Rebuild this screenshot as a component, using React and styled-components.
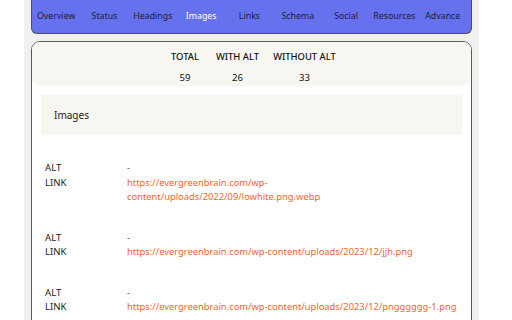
import React from "react";
import styled, { createGlobalStyle } from "styled-components";

const Global = createGlobalStyle`
  html, body { margin: 0; padding: 0; background: #ffffff; }
  body { font-family: "Noto Sans", "Open Sans", sans-serif; color: #222; }
`;

const Shell = styled.div`
  margin-left: 24px;
  width: 441px;
  height: 320px;
  overflow: hidden;
  padding: 0 7px;
  background: #f1f0f1;
`;

const Nav = styled.nav`
  display: flex;
  align-items: center;
  height: 34px;
  box-sizing: border-box;
  padding: 0 4px 2px 0;
  background: #6672ed;
  border: 1px solid #4a4a66;
  border-top: none;
  border-radius: 0 0 6px 6px;
`;

const Tab = styled.span`
  flex: 1;
  text-align: center;
  white-space: nowrap;
  font-size: 8.8px;
  color: ${(p) => (p.$active ? "#ffffff" : "#1c1c36")};
`;

const Card = styled.section`
  margin-top: 7px;
  background: #ffffff;
  border: 1px solid #5a5a5a;
  border-radius: 9px;
  height: 300px;
  box-sizing: border-box;
`;

const Stats = styled.div`
  background: #f8f6f1;
  border-radius: 8px;
  display: flex;
  justify-content: center;
  padding: 7px 0 0;
`;

const StatsGrid = styled.div`
  display: grid;
  grid-template-columns: 35px 70px 64px;
  row-gap: 5px;
  margin-left: 1px;
`;

const StatHead = styled.div`
  font-size: 9.4px;
  font-weight: 500;
  color: #111;
  text-align: center;
  white-space: nowrap;
  line-height: 16px;
`;

const StatValue = styled.div`
  font-size: 9.6px;
  color: #111;
  text-align: center;
  line-height: 16px;
`;

const Body = styled.div`
  padding: 9px 9px 0 9px;
`;

const SectionBox = styled.div`
  background: #f8f6f1;
  height: 40px;
  display: flex;
  align-items: center;
  padding-left: 13px;
  font-size: 10px;
  color: #222;
`;

const List = styled.div`
  padding: 26px 0 0 4px;
  display: flex;
  flex-direction: column;
  gap: 26px;
`;

const Entry = styled.div`
  display: grid;
  grid-template-columns: 82px 331px;
  font-size: 9.35px;
  line-height: 14.5px;
  color: #222;
`;

const Label = styled.div`
  font-size: 9.6px;
`;

const Value = styled.div`
  color: ${(p) => (p.$link ? "#f2652f" : "#555")};
`;

const tabs = ["Overview", "Status", "Headings", "Images", "Links", "Schema", "Social", "Resources", "Advance"];

const images = [
  { alt: "-", link: "https://evergreenbrain.com/wp-content/uploads/2022/09/lowhite.png.webp" },
  { alt: "-", link: "https://evergreenbrain.com/wp-content/uploads/2023/12/jjh.png" },
  { alt: "-", link: "https://evergreenbrain.com/wp-content/uploads/2023/12/pngggggg-1.png" },
];

export default function App() {
  return (
    <>
      <Global />
      <Shell>
        <Nav>
          {tabs.map((t) => (
            <Tab key={t} $active={t === "Images"}>{t}</Tab>
          ))}
        </Nav>
        <Card>
          <Stats>
            <StatsGrid>
              <StatHead>TOTAL</StatHead>
              <StatHead>WITH ALT</StatHead>
              <StatHead>WITHOUT ALT</StatHead>
              <StatValue>59</StatValue>
              <StatValue>26</StatValue>
              <StatValue>33</StatValue>
            </StatsGrid>
          </Stats>
          <Body>
            <SectionBox>Images</SectionBox>
            <List>
              {images.map((img, i) => (
                <Entry key={i}>
                  <Label>ALT</Label>
                  <Value>{img.alt}</Value>
                  <Label>LINK</Label>
                  <Value $link>{img.link}</Value>
                </Entry>
              ))}
            </List>
          </Body>
        </Card>
      </Shell>
    </>
  );
}
